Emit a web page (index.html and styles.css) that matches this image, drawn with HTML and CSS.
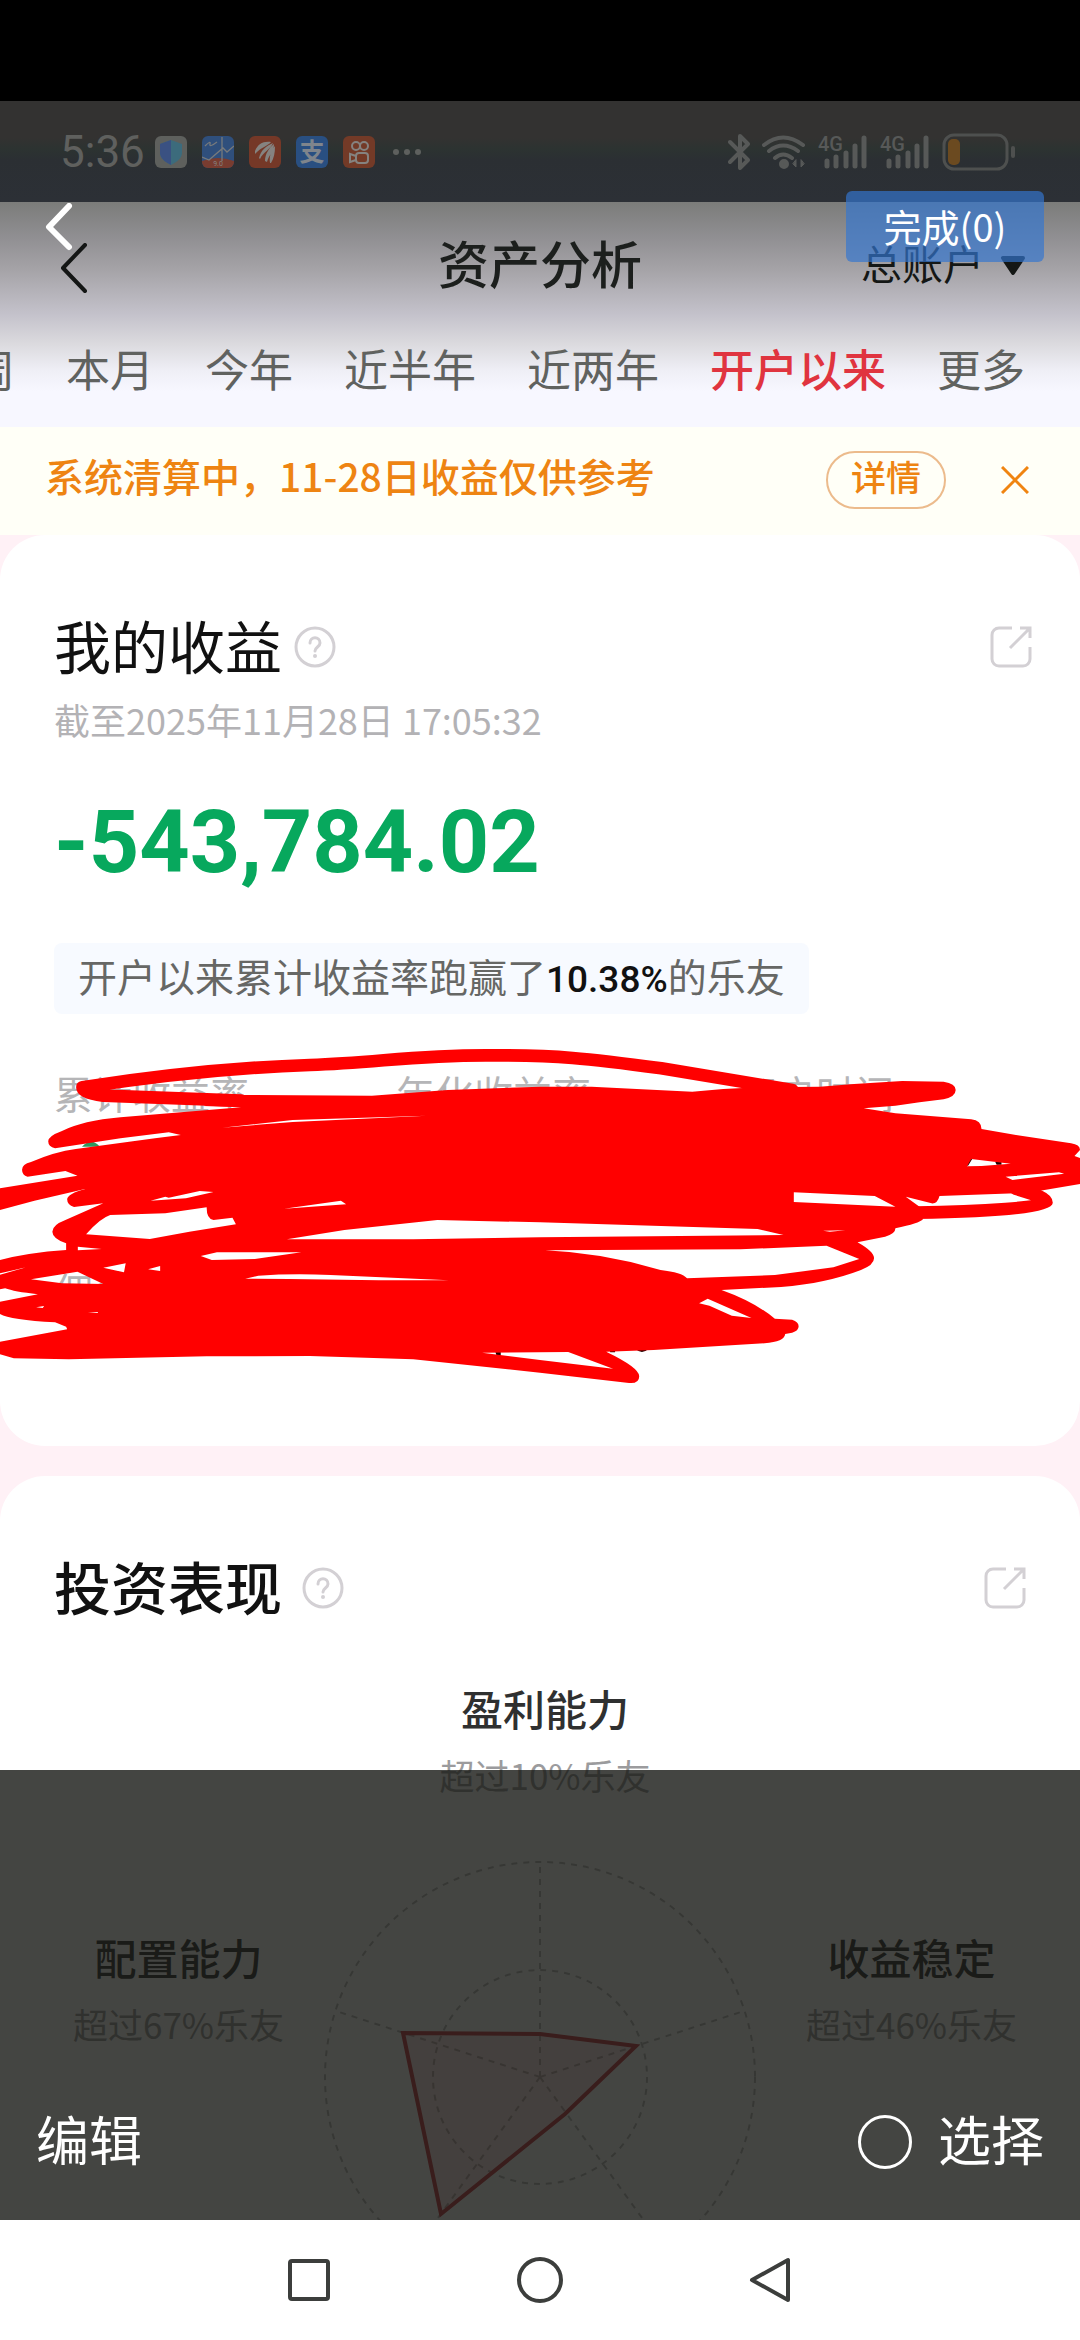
FILE: index.html
```html
<!DOCTYPE html>
<html lang="zh-CN">
<head>
<meta charset="utf-8">
<meta name="viewport" content="width=device-width, initial-scale=1">
<title>资产分析</title>
<link rel="stylesheet" href="styles.css">
</head>
<body>
<svg class="defs" width="0" height="0" aria-hidden="true">
  <symbol id="help" viewBox="0 0 42 42">
    <circle cx="21" cy="21" r="19" fill="none" stroke="currentColor" stroke-width="3"/>
    <path d="M16 17c0-7 10-7 10 0 0 4-5 4-5 8" fill="none" stroke="currentColor" stroke-width="3" stroke-linecap="round"/>
    <circle cx="21" cy="30" r="2" fill="currentColor"/>
  </symbol>
  <symbol id="share" viewBox="0 0 42 42">
    <path d="M22 2H9a7 7 0 0 0-7 7v24a7 7 0 0 0 7 7h24a7 7 0 0 0 7-7V21M30 2h10v10M40 2 20 22" fill="none" stroke="currentColor" stroke-width="3"/>
  </symbol>
  <symbol id="signal" viewBox="0 0 44 34">
    <g stroke="currentColor" stroke-width="5" stroke-linecap="round">
      <path d="M3 26v5M12 22v9M22 18v13M31 11v20M40 3v28"/>
    </g>
  </symbol>
</svg>
<div class="stage">
  <div class="letterbox"></div>
  <div class="status">
    <span class="time">5:36</span>
    <svg class="app-icon" viewBox="0 0 32 32"><rect width="32" height="32" rx="6" fill="#5e605d"/><path d="M16 4 27 8v9c0 5-5 9-11 12C10 26 5 22 5 17V8z" fill="#3c6b7c"/><path d="M16 4 5 8v9c0 5 5 9 11 12z" fill="#3a5182"/></svg>
    <svg class="app-icon" viewBox="0 0 32 32"><rect width="32" height="32" rx="6" fill="#2f4f7c"/><path d="M0 25q16-6 32 0v1a6 6 0 0 1-6 6H6a6 6 0 0 1-6-6z" fill="#783c30"/><path d="M0 21 7 24 21 12l4 4 7-6M3 10q6-6 5-2t7-2M20 1v24" fill="none" stroke="#777a7c" stroke-width="1.3"/><text x="16" y="30" text-anchor="middle" class="icon-num">9.0</text></svg>
    <svg class="app-icon" viewBox="0 0 32 32"><rect width="32" height="32" rx="6" fill="#753827"/><g fill="#858380"><path d="M6 15C9 8 14 5 22 6 19 10 12 11 6 18zM10 22c2-8 7-12 14-15-2 6-10 9-13 16zM16 25c0-7 4-13 9-17 0 8-5 10-7 18zM21 27c-1-6 1-13 5-17 0 7-1 12-4 17z"/></g></svg>
    <svg class="app-icon" viewBox="0 0 32 32"><rect width="32" height="32" rx="6" fill="#294f81"/><text x="16" y="25" text-anchor="middle" class="icon-zhi">支</text></svg>
    <svg class="app-icon" viewBox="0 0 32 32"><rect width="32" height="32" rx="6" fill="#733a27"/><g fill="none" stroke="#858380" stroke-width="2"><circle cx="13" cy="10" r="4"/><circle cx="21" cy="10" r="4"/><rect x="13" y="17" width="12" height="10" rx="3"/><path d="M13 20 7 18v8l6-2z"/></g></svg>
    <svg class="dots" viewBox="0 0 28 6" fill="#5e605e"><circle cx="3" cy="3" r="3"/><circle cx="14" cy="3" r="3"/><circle cx="25" cy="3" r="3"/></svg>
    <span class="spring"></span>
    <svg class="bluetooth" viewBox="0 0 22 36" fill="none" stroke="currentColor" stroke-width="4" stroke-linejoin="round" stroke-linecap="round"><path d="M2 8 20 26 12 34V2l8 8L2 28"/></svg>
    <svg class="wifi" viewBox="0 0 44 34" fill="none" stroke="currentColor" stroke-width="4" stroke-linecap="round"><path d="M2 10q19-15 39 0M7 16q14-11 29 0M13 23q8-7 17 0"/><circle cx="22" cy="29" r="3" fill="currentColor"/><path d="M34 25v7l-3-3zM39 25v7l3-3z" stroke-width="1" fill="currentColor"/></svg>
    <span class="cell"><span class="net">4G</span><svg><use href="#signal"/></svg></span>
    <span class="cell"><span class="net">4G</span><svg><use href="#signal"/></svg></span>
    <svg class="battery" viewBox="0 0 74 38"><rect x="2" y="2" width="63" height="34" rx="10" fill="none" stroke="#4e504f" stroke-width="3"/><rect x="6" y="6" width="12" height="26" rx="5" fill="#6b4a20"/><rect x="69" y="13" width="4" height="12" rx="2" fill="#4e504f"/></svg>
  </div>

  <main class="app">
    <div class="top">
      <header class="header">
        <button class="back" aria-label="返回"><svg viewBox="0 0 28 50"><path d="M25 2 3 25 25 48" fill="none" stroke="#141615" stroke-width="4" stroke-linecap="round" stroke-linejoin="round"/></svg></button>
        <h1>资产分析</h1>
        <button class="account">总账户<svg viewBox="0 0 26 20"><path d="M3 2h20L13 17z" fill="#141715" stroke="#141715" stroke-width="4" stroke-linejoin="round"/></svg></button>
      </header>
      <nav class="tabs">
        <a href="#">周</a><a href="#">本月</a><a href="#">今年</a><a href="#">近半年</a><a href="#">近两年</a><a href="#" class="on">开户以来</a><a href="#">更多</a>
      </nav>
    </div>
    <div class="notice">
      <p>系统清算中，11-28日收益仅供参考</p>
      <button class="pill">详情</button>
      <button class="close" aria-label="关闭"><svg viewBox="0 0 28 28"><path d="M1 1 27 27M27 1 1 27" stroke="#f08410" stroke-width="3"/></svg></button>
    </div>

    <section class="card">
      <div class="card-head">
        <h2 class="light">我的收益</h2>
        <svg class="help"><use href="#help"/></svg>
        <button class="share" aria-label="分享"><svg><use href="#share"/></svg></button>
      </div>
      <p class="asof">截至2025年11月28日 17:05:32</p>
      <p class="amount">-543,784.02</p>
      <p class="chip">开户以来累计收益率跑赢了<b>10.38%</b>的乐友</p>
      <div class="metrics">
        <span>累计收益率</span><span>年化收益率</span><span>开户时间</span>
        <span>佣金</span>
      </div>
      <svg class="scribble" viewBox="0 0 3136 1140" preserveAspectRatio="none" aria-hidden="true">
        <path d="M238 350q27-30 52 0z" fill="#2d9a60"/>
        <path d="M2797 405l16-18h10l-12 20zM2890 396h18v8h-14zM1438 964h16v14h-12zM1770 960h16v7h-14zM1846 958h36q-18 16-36 0z" fill="#200"/>
        <g fill="none" stroke="red" stroke-width="38" stroke-linecap="round" stroke-linejoin="round">
          <path d="M700 212 300 197Q240 190 240 172C500 130 700 112 900 105 1100 98 1200 75 1420 76 1620 76 1700 84 1920 115L2300 180"/>
          <path d="M2660 548C2850 545 3038 532 3038 518 3038 500 2990 490 2950 476"/>
        </g>
        <path fill="red" fill-rule="evenodd" d="M680 195 1080 197 1300 180 1568 170 1718 170 2010 185 2100 177 2200 172 2380 170 2480 162 2620 153 2740 155Q2775 160 2775 180T2740 208L2670 217 2600 227 2508 235 2600 250 2820 268Q2850 272 2850 297L2950 315 3110 340Q3136 344 3136 360L3120 378 3136 384V462L3020 482 2950 490 2728 498Q2722 522 2705 520L2630 500 2670 530 2680 568Q2670 580 2600 595 2600 612 2570 620L2490 637Q2538 665 2538 685T2500 720Q2400 760 2268 771L2095 780Q2190 815 2250 866L2300 869Q2319 875 2319 889T2300 908L2280 912Q2278 935 2220 940L1898 960 1760 965Q1855 1012 1856 1038T1820 1058L1568 1028 1200 988 900 978 600 979 200 988 40 985 0 973V935L195 898 192 890 160 877Q30 870 0 852V815L110 793Q40 785 15 775L0 778V690Q80 668 192 660V640Q152 625 152 605T190 570L300 520 215 531Q195 525 195 508T250 476L100 512 0 540V475L225 437 190 423 80 440Q64 435 64 419T90 396Q160 365 220 357L450 325 525 315 490 307 350 325 160 355Q140 350 140 334T180 303Q240 272 350 262L700 232 590 228z
        M1400 968 1650 966 1780 1016 1568 990z
        M1583 661 2150 658 2400 647 2495 687 2420 712 2250 735 1995 745Q1980 727 1918 720 1750 668 1583 661z
        M2030 820 2055 806 2182 864 2125 857 2060 827z
        M250 613Q290 565 320 555L480 550 600 532Q600 568 620 570L675 563 685 583 550 605 435 627z
        M437 512 480 500 490 503 580 483 620 486 540 505z
        M825 536 990 512 1005 523z
        M226 650 295 657 226 661z
        M90 748 225 725 300 762 180 760z
        M300 713 365 700 360 727zM430 718 465 708V723z
        M583 678 630 667H875L740 687 615 690z
        M712 746 750 737Q850 730 960 735L1303 751H1100L840 747z
        M833 628 1000 600 1270 570 1568 577 2200 597 2275 615 1568 622 1200 628z
        M2305 487 2540 498 2600 530 2305 516z
        M2390 602 2455 601 2410 605z
        M2808 409 2820 387 2935 401 2850 408z
        M2920 440 3075 427 3090 431 2940 450z
        M105 832 128 828 124 834zM255 848 284 846V849zM0 730 76 712 0 734z
        M645 293 850 270 1240 257 850 276z"/>
      </svg>
    </section>

    <section class="card">
      <div class="card-head second">
        <h2>投资表现</h2>
        <svg class="help"><use href="#help"/></svg>
        <button class="share" aria-label="分享"><svg><use href="#share"/></svg></button>
      </div>
      <div class="radar">
        <div class="skill top-skill"><h3>盈利能力</h3><p>超过10%乐友</p></div>
        <div class="skill"><h3>配置能力</h3><p>超过67%乐友</p></div>
        <svg class="web" viewBox="0 0 432 432">
          <g fill="none" stroke="#b9b9b9" stroke-width="2" stroke-dasharray="6 6">
            <circle cx="211" cy="215" r="215"/><circle cx="211" cy="215" r="107"/>
            <path d="M211 215V0M211 215 415 149M211 215 337 389M211 215 85 389M211 215 7 149"/>
          </g>
          <path d="M211 172 307 184 236 252 112 352 74 171z" fill="#f03040" fill-opacity=".12" stroke="#c83840" stroke-width="4"/>
        </svg>
        <div class="skill"><h3>收益稳定</h3><p>超过46%乐友</p></div>
      </div>
    </section>
  </main>

  <button class="exit" aria-label="退出选择"><svg viewBox="0 0 28 48"><path d="M24 3 4 24 24 44" fill="none" stroke="#fff" stroke-width="6" stroke-linecap="round" stroke-linejoin="round"/></svg></button>
  <button class="done">完成(0)</button>
  <div class="picker">
    <button>编辑</button>
    <label><input type="radio" name="pick">选择</label>
  </div>
</div>
<nav class="system">
  <button aria-label="最近任务"><svg viewBox="0 0 48 48"><rect x="5" y="5" width="38" height="38" rx="2"/></svg></button>
  <button aria-label="主页"><svg viewBox="0 0 48 48"><circle cx="24" cy="24" r="21"/></svg></button>
  <button aria-label="返回"><svg viewBox="0 0 48 48"><path d="M5 24 41 4V44z"/></svg></button>
</nav>
</body>
</html>
```
FILE: styles.css
```css
* { box-sizing: border-box; margin: 0; padding: 0; }
body {
  display: flex;
  flex-direction: column;
  height: 100vh;
  background: #fff;
  color: #111;
  font-family: "Noto Sans CJK SC", sans-serif;
}
button {
  border: 0;
  background: none;
  color: inherit;
  font: inherit;
}
a { color: inherit; text-decoration: none; }
svg { display: block; }
h1, h2, h3 { font-weight: 500; }
.defs { position: absolute; }
.stage {
  position: relative;
  flex: 1;
  min-height: 0;
  overflow: hidden;
}
.letterbox { height: 101px; background: #000; }

/* dimmed phone status bar */
.status {
  display: flex;
  align-items: center;
  height: 101px;
  padding: 0 64px 0 60px;
  background: linear-gradient(#333231 0 36%, #2c3331 48%, #2b2f33 58%, #2c3036);
  color: #575958;
}
.time {
  width: 95px;
  color: #5f605e;
  font: 44px/50px Roboto, sans-serif;
}
.app-icon { width: 32px; height: 32px; margin-right: 15px; }
.icon-num { font: 7px Roboto, sans-serif; fill: #858380; }
.icon-zhi { font: 700 25px "Noto Sans CJK SC", sans-serif; fill: #7f858c; }
.dots { width: 28px; height: 6px; margin-left: 3px; }
.spring { flex: 1; }
.bluetooth { width: 22px; height: 36px; margin-right: 12px; }
.wifi { width: 44px; height: 34px; margin-right: 12px; }
.cell {
  position: relative;
  width: 50px;
  height: 34px;
  margin-right: 12px;
  padding-left: 6px;
}
.cell svg { width: 44px; height: 34px; }
.net {
  position: absolute;
  left: 0;
  top: 0;
  font: 500 20px/18px Roboto, sans-serif;
}
.battery { width: 74px; height: 38px; }

/* page header */
.app { background: #fff1f6; }
.top {
  background: linear-gradient(#7b7c7a, #8f8e91 15%, #a5a3a7 30%, #c4c2cb 50%, #dbdade 63%, #efeff6 75%, #f7f7ff 84%);
}
.header {
  display: grid;
  grid-template-columns: 1fr auto 1fr;
  align-items: center;
  height: 124px;
  padding: 0 54px;
}
.header h1 {
  margin-bottom: 5px;
  color: #1c1f1d;
  font-size: 51px;
  line-height: 60px;
}
.back { justify-self: start; width: 28px; margin: 8px 0 0 6px; }
.account {
  display: flex;
  justify-self: end;
  align-items: center;
  gap: 16px;
  margin-bottom: 4px;
  color: #141715;
  font-size: 41px;
  line-height: 60px;
}
.account svg { width: 26px; height: 20px; margin-top: 8px; }
.tabs {
  display: flex;
  gap: 51px;
  margin-left: -29px;
  padding-bottom: 17px;
  color: #60625f;
  font-size: 44px;
  line-height: 84px;
  white-space: nowrap;
}
.tabs .on { color: #e0343f; font-weight: 500; }

.notice {
  display: flex;
  align-items: center;
  height: 108px;
  padding: 0 51px 3px 45px;
  background: #fffff7;
  color: #ee8412;
  font-weight: 500;
}
.notice p { flex: 1; margin-bottom: 10px; font-size: 39px; line-height: 48px; }
.pill {
  width: 120px;
  height: 58px;
  border: 2px solid #ecbb8c;
  border-radius: 29px;
  font-size: 35px;
  line-height: 44px;
  padding-bottom: 8px;
}
.close { margin-left: 55px; }
.close svg { width: 28px; height: 28px; }

/* cards */
.card {
  position: relative;
  margin-bottom: 30px;
  padding-top: 77px;
  border-radius: 45px;
  background: #fff;
}
.card-head {
  display: flex;
  align-items: center;
  gap: 12px;
  padding: 0 48px 0 54px;
}
.card-head.second { gap: 20px; padding-right: 54px; }
.card-head h2 { font-size: 57px; line-height: 64px; }
.card-head .light { font-weight: 400; }
.help, .share svg { width: 42px; height: 42px; color: #d3d0d4; }
.help, .share { margin-top: 6px; }
.share { margin-left: auto; }
.asof {
  margin: 21px 54px 0;
  color: #b3b2b5;
  font-size: 36px;
  line-height: 44px;
}
.amount {
  margin: 53px 54px 0;
  color: #07a85d;
  font: 700 88px/96px Roboto, sans-serif;
}
.chip {
  width: fit-content;
  margin: 53px 54px 0;
  padding: 8px 24px 15px;
  border-radius: 8px;
  background: #f7faff;
  color: #666765;
  font-size: 39px;
  line-height: 48px;
}
.chip b { color: #111; font: 500 37px/1 Roboto, sans-serif; }
.metrics {
  display: grid;
  grid-template-columns: repeat(3, 1fr);
  row-gap: 149px;
  padding: 54px 0 133px 54px;
  color: #b5b5b7;
  font-size: 39px;
  line-height: 48px;
}
.scribble {
  position: absolute;
  left: 0;
  bottom: 36px;
  width: 100%;
  height: 380px;
}

.radar {
  display: grid;
  grid-template-columns: 1fr 432px 1fr;
  padding: 65px 18px 0 28px;
}
.skill { padding-top: 69px; color: #2f3030; text-align: center; }
.skill h3 { font-size: 42px; line-height: 52px; }
.skill p {
  margin-top: 19px;
  color: #9b9b9d;
  font-size: 35px;
  line-height: 44px;
}
.top-skill { grid-column: 1 / -1; padding: 0 0 65px; }
.web { width: 432px; height: 432px; overflow: visible; }

/* selection layer over the page */
.exit { position: absolute; left: 45px; top: 203px; width: 28px; }
.done {
  position: absolute;
  right: 36px;
  top: 191px;
  width: 198px;
  height: 71px;
  padding-bottom: 2px;
  border-radius: 6px;
  background: rgba(51, 118, 208, .68);
  color: #fff;
  font-size: 38px;
}
.picker {
  position: absolute;
  left: 0;
  right: 0;
  bottom: 0;
  display: flex;
  justify-content: space-between;
  align-items: flex-end;
  height: 450px;
  padding: 0 36px 50px;
  background: rgba(21, 23, 19, .8);
  color: #fff;
  font-size: 53px;
  line-height: 64px;
}
.picker label { display: flex; align-items: center; gap: 26px; }
.picker input {
  appearance: none;
  width: 54px;
  height: 54px;
  margin-top: 8px;
  border: 3px solid #fff;
  border-radius: 50%;
}
.system {
  display: flex;
  justify-content: center;
  align-items: center;
  gap: 183px;
  height: 120px;
  background: #fff;
}
.system svg {
  width: 48px;
  height: 48px;
  fill: none;
  stroke: #3c3e3c;
  stroke-width: 4;
  stroke-linejoin: round;
}
```
